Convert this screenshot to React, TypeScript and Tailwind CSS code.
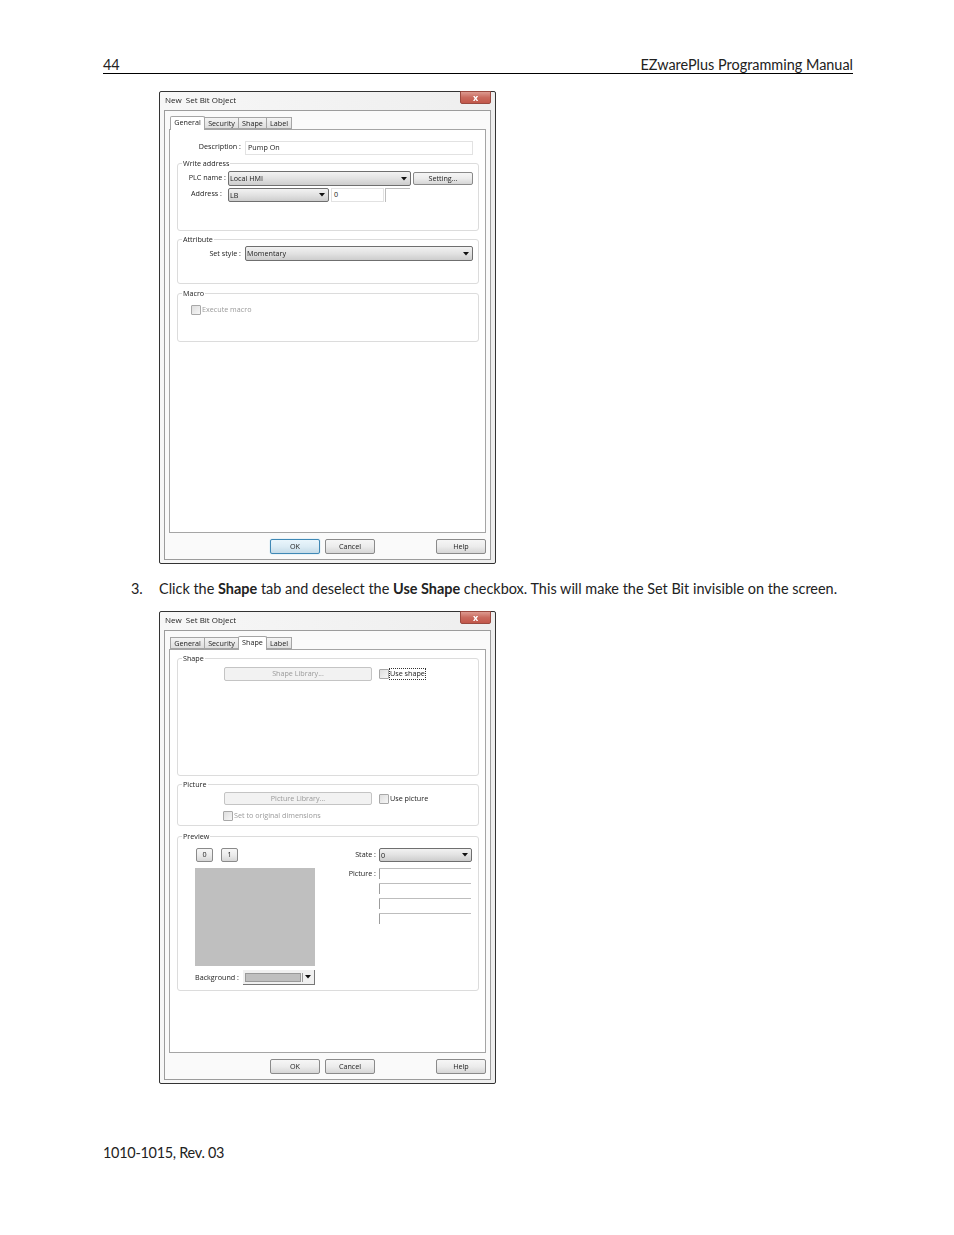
import type { ReactNode } from 'react'

const ui = "font-['Open_Sans',sans-serif] text-[7.2px] leading-none text-[#222]"

function Arrow() {
  return (
    <svg width="6" height="4" viewBox="0 0 6 4" className="shrink-0">
      <path d="M0 0h6L3 3.5z" fill="#111" />
    </svg>
  )
}

function Btn({ children, width, height = 'h-[15px]', active, disabled }: { children: ReactNode; width: string; height?: string; active?: boolean; disabled?: boolean }) {
  let look = 'border-[#8a8a8a] bg-gradient-to-b from-[#f6f6f6] via-[#ececec] to-[#d6d6d6] text-[#222]'
  if (active) look = 'border-[#3f88b5] bg-gradient-to-b from-[#eaf6fc] via-[#dcecf5] to-[#c4dbe8] text-[#222] shadow-[0_0_1px_#5fb4e0]'
  if (disabled) look = 'border-[#c4c4c4] bg-[#f2f2f2] text-[#9a9a9a]'
  return (
    <div className={`${width} ${height} ${look} flex shrink-0 items-center justify-center rounded-[2px] border`}>{children}</div>
  )
}

function Select({ value, width, height = 'h-[15px]' }: { value: string; width: string; height?: string }) {
  return (
    <div className={`${width} ${height} flex shrink-0 items-center justify-between rounded-[2px] border border-[#6f6f6f] bg-gradient-to-b from-[#f2f2f2] via-[#e2e2e2] to-[#cdcdcd] pl-[1px] pr-[3px]`}>
      <span className="mt-px">{value}</span>
      <Arrow />
    </div>
  )
}

function Input({ value, width }: { value: string; width: string }) {
  return <div className={`${width} flex h-[14px] shrink-0 items-center border border-[#e2e2e2] bg-white pl-[2px]`}>{value}</div>
}

function Check({ label, dotted, disabled }: { label: string; dotted?: boolean; disabled?: boolean }) {
  return (
    <div className="flex items-center">
      <div className="h-[10px] w-[10px] shrink-0 rounded-[1px] border border-[#a8a8a8] bg-gradient-to-br from-[#dedede] to-[#f6f6f6]" />
      <span className={`${dotted ? 'ml-0 border border-dotted border-[#333] py-px' : 'ml-px'} ${disabled ? 'text-[#9a9a9a]' : ''}`}>{label}</span>
    </div>
  )
}

function Group({ title, height, children }: { title: string; height: string; children: ReactNode }) {
  return (
    <div className={`${height} relative w-[302px] rounded-[3px] border border-[#dcdcdc]`}>
      <span className="absolute left-[4px] top-[-4px] bg-white px-[1px]">{title}</span>
      {children}
    </div>
  )
}

function Tabs({ active }: { active: string }) {
  const tabs = [
    { name: 'General', w: 'w-[35px]' },
    { name: 'Security', w: 'w-[35px]' },
    { name: 'Shape', w: 'w-[29px]' },
    { name: 'Label', w: 'w-[26px]' },
  ]
  return (
    <div className="relative z-10 flex h-[14px] pl-px">
      {tabs.map((t) => (
        t.name === active ? (
          <div key={t.name} className={`${t.w} -mr-px flex h-[14px] items-start justify-center rounded-t-[2px] border border-b-0 border-[#a5a5a5] bg-white pt-[2px]`}>{t.name}</div>
        ) : (
          <div key={t.name} className={`${t.w} -mr-px mt-px flex h-[12px] items-center justify-center border border-[#a5a5a5] bg-gradient-to-b from-[#f4f4f4] to-[#dfdfdf] pt-[2px]`}>{t.name}</div>
        )
      ))}
    </div>
  )
}

function Dialog({ tab, okActive, children }: { tab: string; okActive?: boolean; children: ReactNode }) {
  return (
    <div className={`${ui} ml-[56px] flex h-[473px] w-[337px] flex-col rounded-[2px] border border-[#333] bg-gradient-to-r from-[#f7f7f7] to-[#eeeeee] px-[4px] blur-[0.25px]`}>
      <div className="flex h-[18px] shrink-0 items-start justify-between">
        <span className="mt-[4px] pl-[1px] text-[8px]">New&nbsp; Set Bit Object</span>
        <div className="-mt-px flex h-[13px] w-[31px] items-center justify-center rounded-b-[2px] border border-[#9a4a40] bg-gradient-to-b from-[#dd9a90] via-[#c96a5e] to-[#c2574a] text-[9px] font-bold text-white">x</div>
      </div>
      <div className="h-[450px] w-[327px] border border-[#9c9c9c] bg-[#fafafa] px-[4px] pt-[5px]">
        <Tabs active={tab} />
        <div className="-mt-px h-[404px] w-[317px] border border-[#a5a5a5] bg-white px-[7px]">{children}</div>
        <div className="mt-[6px] flex w-[317px]">
          <div className="ml-[101px]"><Btn width="w-[50px]" active={okActive}>OK</Btn></div>
          <div className="ml-[5px]"><Btn width="w-[50px]">Cancel</Btn></div>
          <div className="ml-auto"><Btn width="w-[50px]">Help</Btn></div>
        </div>
      </div>
    </div>
  )
}

function GeneralPage() {
  return (
    <>
      <div className="mt-[11px] flex h-[14px] items-center">
        <span className="-mt-[2px] w-[64px] text-right">Description :</span>
        <div className="ml-[4px]"><Input value="Pump On" width="w-[228px]" /></div>
      </div>
      <div className="mt-[8px]">
        <Group title="Write address" height="h-[68px]">
          <div className="mt-[7px] flex h-[15px] items-center">
            <span className="-mt-px w-[48px] text-right">PLC name :</span>
            <div className="ml-[2px]"><Select value="Local HMI" width="w-[183px]" /></div>
            <div className="ml-[2px]"><Btn width="w-[60px]" height="h-[13px]">Setting...</Btn></div>
          </div>
          <div className="mt-[2px] flex h-[14px] items-center">
            <span className="-mt-[2px] w-[44px] text-right">Address :</span>
            <div className="ml-[6px]"><Select value="LB" width="w-[101px]" height="h-[14px]" /></div>
            <div className="ml-[2px]"><Input value="0" width="w-[53px]" /></div>
            <div className="ml-px h-[14px] w-[25px] border-l border-t border-[#bdbdbd]" />
          </div>
        </Group>
      </div>
      <div className="mt-[8px]">
        <Group title="Attribute" height="h-[45px]">
          <div className="mt-[6px] flex h-[15px] items-center">
            <span className="w-[63px] text-right">Set style :</span>
            <div className="ml-[4px]"><Select value="Momentary" width="w-[228px]" /></div>
          </div>
        </Group>
      </div>
      <div className="mt-[9px]">
        <Group title="Macro" height="h-[49px]">
          <div className="ml-[13px] mt-[11px]"><Check label="Execute macro" disabled /></div>
        </Group>
      </div>
    </>
  )
}

function ShapePage() {
  return (
    <>
      <div className="mt-[8px]">
        <Group title="Shape" height="h-[118px]">
          <div className="ml-[46px] mt-[8px] flex items-center">
            <Btn width="w-[148px]" height="h-[14px]" disabled>Shape Library...</Btn>
            <div className="ml-[7px]"><Check label="Use shape" dotted /></div>
          </div>
        </Group>
      </div>
      <div className="mt-[8px]">
        <Group title="Picture" height="h-[42px]">
          <div className="ml-[46px] mt-[7px] flex items-center">
            <Btn width="w-[148px]" height="h-[13px]" disabled>Picture Library...</Btn>
            <div className="ml-[7px]"><Check label="Use picture" /></div>
          </div>
          <div className="ml-[45px] mt-[6px]"><Check label="Set to original dimensions" disabled /></div>
        </Group>
      </div>
      <div className="mt-[10px]">
        <Group title="Preview" height="h-[155px]">
          <div className="flex">
            <div className="ml-[17px] w-[120px] pt-[11px]">
              <div className="ml-px flex gap-[8px]">
                <Btn width="w-[17px]" height="h-[14px]">0</Btn>
                <Btn width="w-[17px]" height="h-[14px]">1</Btn>
              </div>
              <div className="mt-[6px] h-[98px] w-[120px] bg-[#bfbfbf]" />
              <div className="mt-[4px] flex h-[15px] items-center justify-between">
                <span>Background :</span>
                <div className="flex h-[15px] w-[72px] items-center border-b border-r border-[#777] bg-[#f0f0f0] pl-[2px] pr-[3px]">
                  <div className="h-[9px] w-[56px] border border-[#999] bg-[#bfbfbf]" />
                  <div className="ml-[1px] h-[9px] w-px bg-[#999]" />
                  <div className="ml-auto"><Arrow /></div>
                </div>
              </div>
            </div>
            <div className="ml-[25px] pt-[11px]">
              <div className="flex h-[14px] items-center">
                <span className="w-[36px] text-right">State :</span>
                <div className="ml-[3px]"><Select value="0" width="w-[93px]" height="h-[14px]" /></div>
              </div>
              <div className="mt-[6px] flex">
                <span className="mt-[2px] w-[36px] text-right">Picture :</span>
                <div className="ml-[3px] w-[92px]">
                  {[0, 1, 2, 3].map((i) => (
                    <div key={i} className="h-[15px] border-t border-[#bdbdbd]">
                      <div className="h-[10px] w-px bg-[#9c9c9c]" />
                    </div>
                  ))}
                </div>
              </div>
            </div>
          </div>
        </Group>
      </div>
    </>
  )
}

export default function App() {
  return (
    <div className="h-[1235px] w-[954px] bg-white px-[103px] pt-[57px] font-['Lato',sans-serif] text-[14.45px] text-[#222]">
      <div className="flex h-[17px] w-[750px] items-center justify-between border-b border-black pb-px">
        <span>44</span>
        <span>EZwarePlus Programming Manual</span>
      </div>

      <div className="mt-[17px]">
        <Dialog tab="General" okActive><GeneralPage /></Dialog>
      </div>

      <div className="ml-[28px] mt-[17px] flex h-[16px] items-center leading-none">
        <span className="w-[28px]">3.</span>
        <span>Click the <b>Shape</b> tab and deselect the <b>Use Shape</b> checkbox. This will make the Set Bit invisible on the screen.</span>
      </div>

      <div className="mt-[14px]">
        <Dialog tab="Shape"><ShapePage /></Dialog>
      </div>

      <div className="mt-[62px] leading-none tracking-[-0.28px]">1010-1015, Rev. 03</div>
    </div>
  )
}
